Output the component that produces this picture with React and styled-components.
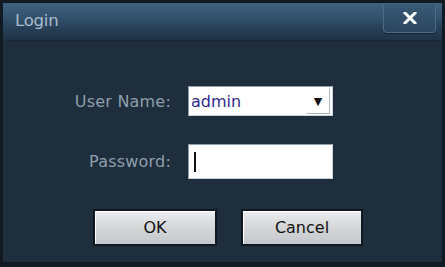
import styled, { createGlobalStyle } from "styled-components";

const Global = createGlobalStyle`
  html, body { margin: 0; padding: 0; background: #0d1419; }
  body { width: 445px; height: 267px; overflow: hidden; }
`;

const Dialog = styled.div`
  box-sizing: border-box;
  width: 445px;
  height: 267px;
  display: flex;
  flex-direction: column;
  background: #1f2e3c;
  border: 3px solid #111a22;
  border-bottom-width: 5px;
  font-family: Tahoma, "DejaVu Sans", "Liberation Sans", sans-serif;
`;

const TitleBar = styled.div`
  height: 37px;
  display: flex;
  align-items: flex-start;
  justify-content: space-between;
  background: linear-gradient(#40627f 0%, #33536f 35%, #253d53 75%, #1f3346 100%);
  border-bottom: 1px solid #1a2836;
`;

const Title = styled.span`
  margin: 8px 0 0 12px;
  font-size: 16.5px;
  color: #a9bccd;
  letter-spacing: -0.2px;
`;

const CloseBtn = styled.button`
  width: 53px;
  height: 29px;
  margin: 1px 6px 0 0;
  padding: 0;
  display: flex;
  align-items: center;
  justify-content: center;
  background: linear-gradient(#3a5a77, #2a4660);
  border: 1px solid #4a6a86;
  border-top: none;
  border-radius: 0 0 4px 4px;
  box-shadow: 0 1px 0 #16222d;
`;

const Form = styled.div`
  display: grid;
  grid-template-columns: 168px 145px;
  column-gap: 17px;
  align-items: center;
  margin-top: 45px;
  row-gap: 28px;
`;

const Label = styled.label`
  justify-self: end;
  font-size: 16px;
  color: #8e9eac;
  letter-spacing: 0.2px;
`;

const Field = styled.div`
  box-sizing: border-box;
  height: ${(p) => p.$h}px;
  display: flex;
  align-items: center;
  background: #fff;
  border: 1px solid #c9d3dc;
  border-top-color: #8ea0b0;
  border-left-color: #8ea0b0;
`;

const Value = styled.span`
  flex: 1;
  padding-left: 2px;
  font-size: 16px;
  color: #2e2a8a;
`;

const Arrow = styled.span`
  width: 22px;
  height: 24px;
  margin-right: 2px;
  display: flex;
  align-items: center;
  justify-content: center;
  border: 1px solid #aab4be;
  border-top-color: #fff;
  border-left-color: #fff;
  font-size: 11px;
  color: #111;
`;

const Caret = styled.span`
  width: 2px;
  height: 20px;
  margin-left: 5px;
  background: #111;
`;

const Buttons = styled.div`
  display: flex;
  gap: 24px;
  margin: 30px 0 0 90px;
`;

const Button = styled.button`
  box-sizing: border-box;
  width: ${(p) => p.$w}px;
  height: 37px;
  font-family: inherit;
  font-size: 16px;
  color: #111;
  background: linear-gradient(#ecedee, #d4d6d8 50%, #c6c9cc);
  border: 2px solid #0f1820;
  box-shadow: inset 1px 1px 0 #fff;
`;

export default function App() {
  return (
    <>
      <Global />
      <Dialog>
        <TitleBar>
          <Title>Login</Title>
          <CloseBtn aria-label="close">
            <svg width="14" height="12" viewBox="0 0 14 12">
              <path d="M2 1 L12 11 M12 1 L2 11" stroke="#fff" strokeWidth="3" strokeLinecap="square" />
            </svg>
          </CloseBtn>
        </TitleBar>
        <Form>
          <Label>User Name:</Label>
          <Field $h={30}>
            <Value>admin</Value>
            <Arrow>▼</Arrow>
          </Field>
          <Label>Password:</Label>
          <Field $h={35}>
            <Caret />
          </Field>
        </Form>
        <Buttons>
          <Button $w={124}>OK</Button>
          <Button $w={122}>Cancel</Button>
        </Buttons>
      </Dialog>
    </>
  );
}
